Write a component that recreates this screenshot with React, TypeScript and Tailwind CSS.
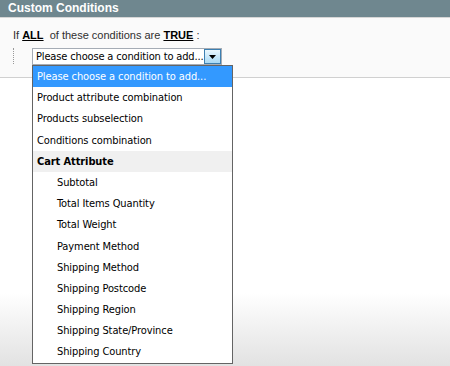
const cartAttrs = [
    "Subtotal",
    "Total Items Quantity",
    "Total Weight",
    "Payment Method",
    "Shipping Method",
    "Shipping Postcode",
    "Shipping Region",
    "Shipping State/Province",
    "Shipping Country",
];

const App = () => {
    return (
        <div className="w-[450px] h-[366px] overflow-hidden bg-gradient-to-b from-white from-[80%] to-[#e2e2e2] font-['Liberation_Sans',Arial,sans-serif] text-[11px] text-[#2f2f2f]">
            <div className="h-[18px] bg-[#6f878f] border-b border-[#d6d6d6] px-2 font-bold text-white text-[12px] leading-[17px]">
                Custom Conditions
            </div>
            <div className="relative h-[60px] bg-[#fafafa] border-b border-[#d0d0d0] pl-[13px] pt-[10px]">
                <div className="leading-[15px]">
                    If <b className="underline text-black">ALL</b>&nbsp; of these conditions are <b className="underline text-black">TRUE</b> :
                </div>
                <div className="flex mt-[5px]">
                    <div className="w-px h-[16px] border-l border-dotted border-[#999]" />
                    <div className="ml-[18px] w-[190px] h-[17px] bg-white border border-[#a5acb5] flex items-center font-['DejaVu_Sans_Condensed','DejaVu_Sans',Tahoma,sans-serif] text-[11px] tracking-[-0.15px]">
                        <span className="flex-1 pl-[3px] text-black leading-[15px] whitespace-nowrap overflow-hidden">Please choose a condition to add...</span>
                        <span className="w-[17px] h-[15px] shrink-0 border border-[#3c7fb1] bg-gradient-to-b from-[#eaf6fd] to-[#a7d9f5] flex items-center justify-center">
                            <svg width="7" height="4" viewBox="0 0 7 4"><path d="M0 0h7L3.5 4z" fill="#000" /></svg>
                        </span>
                    </div>
                </div>
                <div className="absolute left-[32px] top-[47px] w-[201px] border border-[#646464] bg-white text-black z-10 font-['DejaVu_Sans_Condensed','DejaVu_Sans',Tahoma,sans-serif] text-[11px] tracking-[-0.1px]">
                    <div className="h-[21.2px] leading-[21px] pl-[4px] bg-[#3399ff] text-white">Please choose a condition to add...</div>
                    <div className="h-[21.2px] leading-[21px] pl-[4px]">Product attribute combination</div>
                    <div className="h-[21.2px] leading-[21px] pl-[4px]">Products subselection</div>
                    <div className="h-[21.2px] leading-[21px] pl-[4px]">Conditions combination</div>
                    <div className="h-[21.2px] leading-[21px] pl-[4px] bg-[#f0f0f0] font-bold">Cart Attribute</div>
                    {cartAttrs.map((a) => (
                        <div key={a} className="h-[21.2px] leading-[21px] pl-[24px]">{a}</div>
                    ))}
                </div>
            </div>
        </div>
    );
};

export default App;
